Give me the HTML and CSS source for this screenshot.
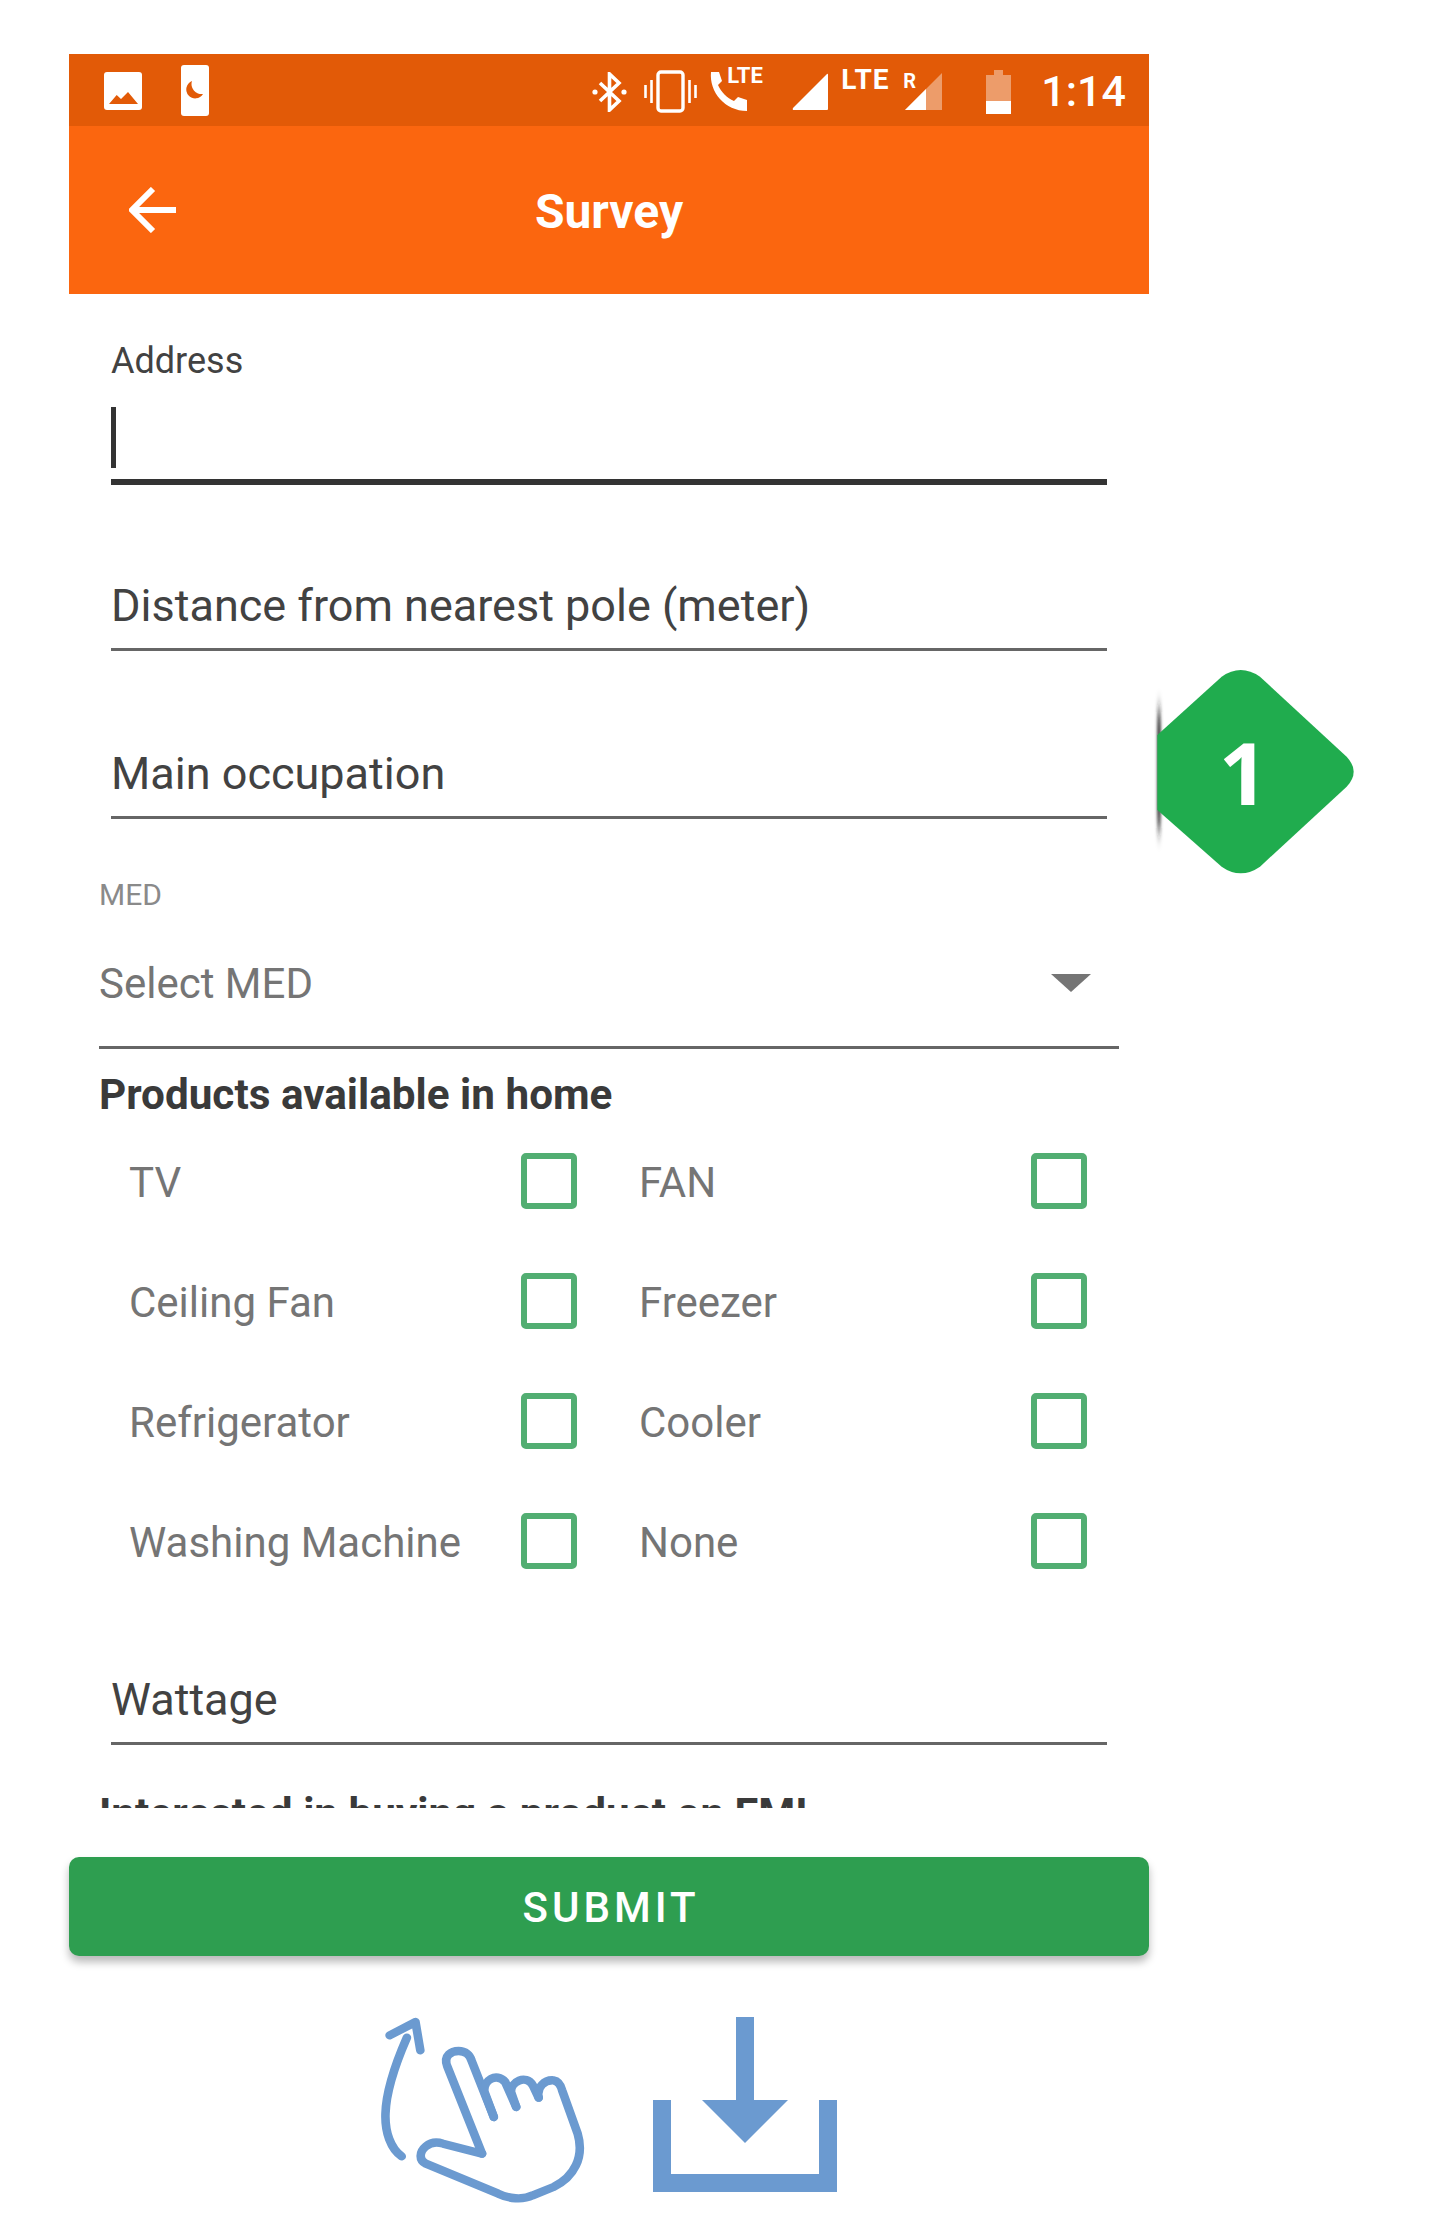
FILE: index.html
```html
<!DOCTYPE html>
<html lang="en">
<head>
<meta charset="utf-8">
<title>Survey</title>
<link rel="stylesheet" href="styles.css">
</head>
<body>
<div class="page">
  <div class="phone">
    <div class="statusbar">
      <svg class="ic-pic" viewBox="0 0 38 38"><rect width="38" height="38" rx="3" fill="#fff"/><polygon points="5,32 12.7,23 17,27 24,20 34,32" fill="#e25a07"/></svg>
      <svg class="ic-dnd" viewBox="0 0 28 51"><rect width="28" height="51" rx="3" fill="#fff"/><path d="M11 16A9 9 0 1 0 22 29A10 10 0 0 1 11 16Z" fill="#e25a07"/></svg>
      <span class="spacer"></span>
      <svg class="ic-bt" viewBox="0 0 35 40"><path d="M8 11L27 29L17.5 38V2L27 11L8 29" fill="none" stroke="#fff" stroke-width="3.6"/><circle cx="3" cy="20" r="2.6" fill="#fff"/><circle cx="32" cy="20" r="2.6" fill="#fff"/></svg>
      <svg class="ic-vib" viewBox="0 0 53 43"><rect x="14" y="2" width="25" height="39" rx="3" fill="none" stroke="#fff" stroke-width="3.4"/><path d="M1.5 15V28M7.5 10V33M45.500 10V33M51.500 15V28" stroke="#fff" stroke-width="2.6"/></svg>
      <span class="call">
        <svg class="ic-call" viewBox="0 0 38 39"><path d="M2 0H10L13 9L9 13C12 20 18 26 25 29L29 25L38 28V39C16 39 0 20 2 0Z" fill="#fff"/></svg>
        <span class="lte-small">LTE</span>
      </span>
      <svg class="ic-sig" viewBox="0 0 36 37"><path d="M35 1Q36 0 36 2V36Q36 37 35 37H2Q0 37 1 35Z" fill="#fff"/></svg>
      <span class="lte-big">LTE</span>
      <span class="roam">
        <svg class="ic-sig2" viewBox="0 0 37 37"><polygon points="37,0 37,37 0,37" fill="#fff" opacity=".4"/><polygon points="21,16 21,37 0,37" fill="#fff"/></svg>
        <span class="r-mark">R</span>
      </span>
      <svg class="ic-bat" viewBox="0 0 25 44"><path d="M8 0H17V5H25V31H0V5H8Z" fill="#fff" opacity=".4"/><rect y="31" width="25" height="13" fill="#fff"/></svg>
      <span class="clock">1:14</span>
    </div>
    <div class="toolbar">
      <svg class="ic-back" viewBox="0 0 48 46"><path d="M47 23H4M24 2L3 23L24 44" fill="none" stroke="#fff" stroke-width="6"/></svg>
      <span class="title">Survey</span>
    </div>
    <div class="scroll">
      <div class="field field-address">
        <div class="address-label">Address</div>
        <div class="address-input"><span class="cursor"></span></div>
      </div>
      <div class="field field-plain field-distance">Distance from nearest pole (meter)</div>
      <div class="field field-plain field-occupation">Main occupation</div>
      <div class="select">
        <div class="select-label">MED</div>
        <div class="select-row">
          <span>Select MED</span>
          <svg class="ic-caret" viewBox="0 0 40 18"><polygon points="0,0 40,0 20,18" fill="#757575"/></svg>
        </div>
      </div>
      <div class="section-title products-title">Products available in home</div>
      <div class="products">
        <div class="product"><span class="product-name">TV</span><span class="check"></span></div>
        <div class="product"><span class="product-name">FAN</span><span class="check"></span></div>
        <div class="product"><span class="product-name">Ceiling Fan</span><span class="check"></span></div>
        <div class="product"><span class="product-name">Freezer</span><span class="check"></span></div>
        <div class="product"><span class="product-name">Refrigerator</span><span class="check"></span></div>
        <div class="product"><span class="product-name">Cooler</span><span class="check"></span></div>
        <div class="product"><span class="product-name">Washing Machine</span><span class="check"></span></div>
        <div class="product"><span class="product-name">None</span><span class="check"></span></div>
      </div>
      <div class="field field-plain field-wattage">Wattage</div>
      <div class="section-title emi-title">Interested in buying a product on EMI</div>
    </div>
    <div class="submit">SUBMIT</div>
  </div>
  <div class="hints">
    <svg class="ic-hand" viewBox="120 110 600 570" preserveAspectRatio="none">
      <g fill="none" stroke="#6b9ad0" stroke-width="25" stroke-linecap="round" stroke-linejoin="round">
        <path d="M145 165L220 125L234 210"/>
        <path d="M195 172C160 255 135 330 133 400C131 455 148 505 180 528"/>
        <path d="M413 520L312 258C300 225 325 212 345 212C365 212 378 225 382 240L447 410"/>
        <path d="M447 410L420 335C415 300 455 275 480 305L512 380"/>
        <path d="M512 380L497 335C495 305 540 280 560 315L577 352"/>
        <path d="M577 352C570 320 595 298 620 300C632 302 640 310 645 330L690 460C710 530 680 590 620 620L560 645C530 660 490 655 460 640L250 550C230 540 230 515 250 498C265 485 285 485 300 490L413 520"/>
      </g>
    </svg>
    <svg class="ic-download" viewBox="0 0 184 175"><path d="M83 0H101V83H135L92 126L49 83H83Z" fill="#6b9ad0"/><path d="M0 83H18V157H166V83H184V175H0Z" fill="#6b9ad0"/></svg>
  </div>
  <svg class="badge" viewBox="0 0 780 780">
    <defs><filter id="edge" filterUnits="userSpaceOnUse" x="30" y="90" width="130" height="600"><feGaussianBlur stdDeviation="5 30"/></filter></defs>
    <rect class="badge-shadow" x="82" y="215" width="10" height="350" filter="url(#edge)"/>
    <path class="badge-shape" d="M82 285L275 110Q332 70 390 110L650 350Q692 395 650 440L390 680Q332 720 275 680L82 510Z"/>
    <text class="badge-num" x="340" y="495" text-anchor="middle">1</text>
  </svg>
</div>
</body>
</html>
```
FILE: styles.css
```css
* { box-sizing: border-box; }
html, body { margin: 0; padding: 0; background: #fff; }
body { font-family: Roboto, "Liberation Sans", sans-serif; overflow: hidden; }
.page { position: relative; width: 1430px; height: 2234px; padding: 54px 0 0 69px; }
.phone { width: 1080px; }

.statusbar { height: 72px; background: #e25a07; display: flex; align-items: center; padding: 3px 23px 0 35px; color: #fff; }
.statusbar svg { display: block; flex: none; }
.spacer { flex: 1; }
.ic-pic { width: 38px; height: 38px; margin-top: -2px; }
.ic-dnd { width: 28px; height: 51px; margin-left: 39px; margin-top: -2px; }
.ic-bt { width: 35px; height: 40px; }
.ic-vib { width: 53px; height: 43px; margin-left: 17px; }
.call { position: relative; margin-left: 12px; width: 38px; height: 39px; }
.ic-call { width: 38px; height: 39px; }
.lte-small { position: absolute; left: 18px; top: -7px; font-size: 22px; line-height: 22px; font-weight: 700; }
.ic-sig { width: 36px; height: 37px; margin-left: 45px; }
.lte-big { margin: 0 0 23px 13px; font-size: 28px; line-height: 28px; font-weight: 700; width: 46px; letter-spacing: 1px; }
.roam { position: relative; width: 37px; height: 37px; margin-left: 18px; }
.ic-sig2 { width: 37px; height: 37px; }
.r-mark { position: absolute; left: -2px; top: -2px; font-size: 20px; line-height: 20px; font-weight: 700; }
.ic-bat { width: 25px; height: 44px; margin-left: 44px; }
.clock { margin-left: 30px; margin-top: -2px; font-size: 43px; line-height: 50px; font-weight: 500; }

.toolbar { height: 168px; background: #fb660f; position: relative; display: flex; align-items: center; justify-content: center; padding-top: 4px; }
.ic-back { position: absolute; left: 60px; top: 61px; width: 48px; height: 46px; }
.title { font-size: 48px; line-height: 54px; font-weight: 700; color: #fff; }

.scroll { height: 1514px; overflow: hidden; }
.field { margin: 0 42px; }
.field-address { padding-top: 45px; }
.address-label { font-size: 36px; line-height: 44px; color: #424242; }
.address-input { height: 102px; border-bottom: 6px solid #333; padding-top: 24px; }
.cursor { display: block; width: 5px; height: 61px; background: #333; }
.field-plain { font-size: 45px; line-height: 64px; color: #424242; padding: 1px 0 10px; border-bottom: 3px solid #666; }
.field-distance { margin-top: 88px; }
.field-occupation { margin-top: 90px; }

.select { margin: 58px 30px 0 30px; border-bottom: 3px solid #666; padding-bottom: 30px; }
.select-label { font-size: 30px; line-height: 36px; color: #8a8a8a; }
.select-row { margin-top: 39px; display: flex; justify-content: space-between; align-items: center; font-size: 42px; line-height: 64px; color: #757575; padding-right: 28px; }
.ic-caret { width: 40px; height: 18px; display: block; margin-top: -2px; }

.section-title { margin-left: 30px; font-size: 42.25px; line-height: 50px; font-weight: 700; color: #3a3a3a; }
.products-title { margin-top: 21px; }
.products { margin: 1px 0 0 60px; display: grid; grid-template-columns: 510px 508px; grid-auto-rows: 120px; }
.product { display: flex; align-items: center; }
.product-name { width: 392px; font-size: 42px; line-height: 50px; color: #757575; padding-top: 4px; }
.check { width: 56px; height: 56px; border: 6px solid #52ae72; border-radius: 5px; }
.field-wattage { margin-top: 66px; }
.emi-title { margin-top: 44px; }

.submit { margin-top: 49px; height: 99px; border-radius: 10px; background: #2e9e50; color: #fff; display: flex; align-items: center; justify-content: center; font-size: 42px; font-weight: 500; letter-spacing: 4px; padding: 2px 0 0 4px; box-shadow: 0 6px 8px rgba(0,0,0,.28); }

.hints { margin: 61px 0 0 312px; display: flex; align-items: flex-start; gap: 65px; }
.ic-hand { width: 207px; height: 190px; display: block; }
.ic-download { width: 184px; height: 175px; display: block; }

.badge { position: absolute; left: 1130px; top: 640px; width: 260px; height: 260px; }
.badge-shadow { fill: #222; }
.badge-shape { fill: #20ac4e; }
.badge-num { font-family: "Open Sans", sans-serif; font-weight: 700; font-size: 258px; fill: #fff; }
```
